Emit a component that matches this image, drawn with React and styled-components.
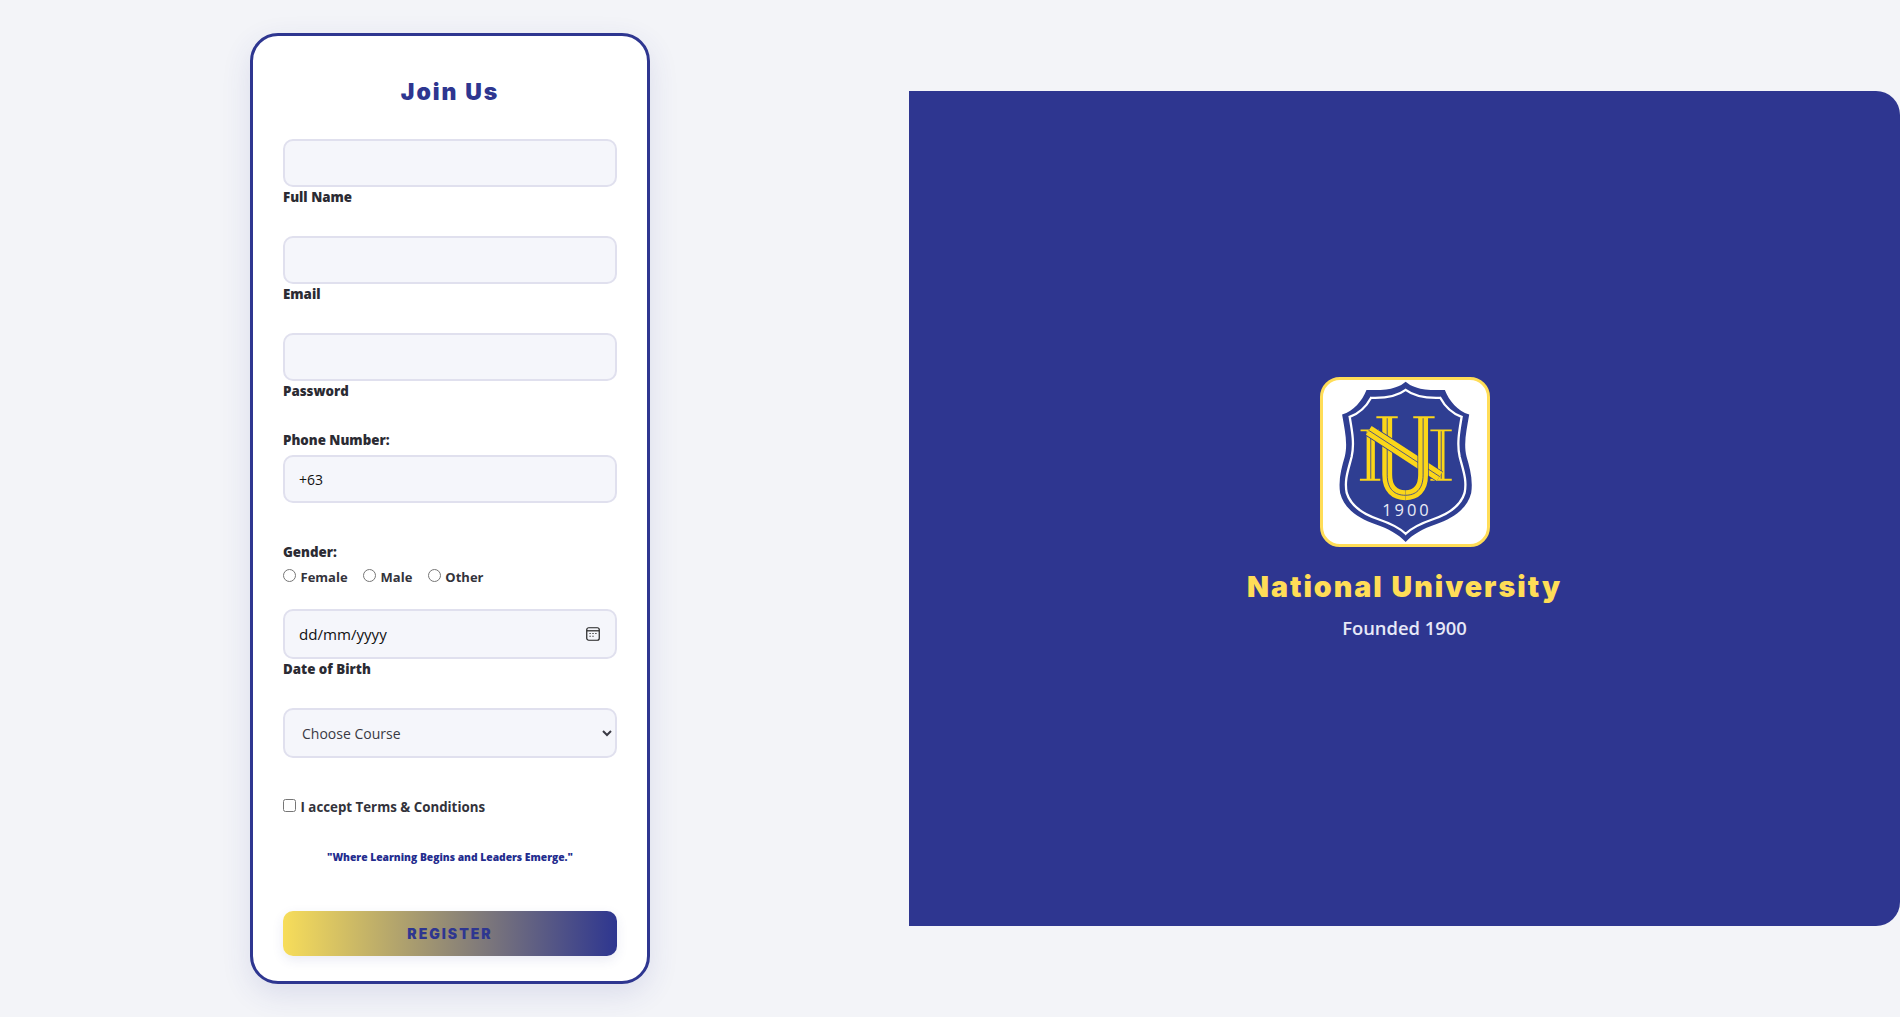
import React from "react";
import styled, { createGlobalStyle } from "styled-components";

const Global = createGlobalStyle`
  html, body { margin: 0; padding: 0; background: #f3f4f8; }
  body { font-family: "Open Sans", "Noto Sans", sans-serif; overflow: hidden; }
`;

const Page = styled.main`
  display: grid;
  grid-template-columns: 900px 1fr;
  column-gap: 9px;
  align-items: center;
  height: 1017px;
`;

const FormColumn = styled.div`
  display: flex;
  justify-content: center;
`;

const Card = styled.form`
  box-sizing: border-box;
  width: 400px;
  height: 951px;
  padding: 40px 30px 24px;
  display: flex;
  flex-direction: column;
  background: #fff;
  border: 3px solid #2e3690;
  border-radius: 28px;
  box-shadow: 0 10px 30px rgba(46, 54, 144, 0.12);
`;

const Title = styled.h2`
  margin: 0 0 30px;
  height: 33px;
  line-height: 33px;
  text-align: center;
  font-family: "Inter", sans-serif;
  font-size: 23px;
  font-weight: 900;
  letter-spacing: 2px;
  color: #2e3690;
`;

const Label = styled.label`
  display: block;
  height: 18px;
  line-height: 18px;
  margin-top: ${(p) => p.$top ?? 1}px;
  margin-bottom: ${(p) => p.$bottom ?? 30}px;
  font-family: "Open Sans", sans-serif;
  font-size: 13.3px;
  font-weight: 800;
  color: #2b2b33;
`;

const Input = styled.input`
  box-sizing: border-box;
  display: block;
  width: 100%;
  height: ${(p) => p.$h ?? 48}px;
  margin-bottom: ${(p) => p.$bottom ?? 0}px;
  padding: 0 14px;
  background: #f5f6fb;
  border: 2px solid #e0e0ee;
  border-radius: 10px;
  font-family: "Open Sans", sans-serif;
  font-size: ${(p) => p.$size ?? 14}px;
  color: #111;
  outline: none;
  &::placeholder { color: #111; opacity: 1; }
`;

const DateBox = styled.div`
  position: relative;
`;

const CalendarIcon = styled.svg`
  position: absolute;
  top: 18px;
  right: 17px;
  width: 14px;
  height: 14px;
`;

const Select = styled.select`
  box-sizing: border-box;
  display: block;
  width: 100%;
  height: 50px;
  margin-bottom: 40px;
  padding: 0 13px;
  background: #f5f6fb;
  border: 2px solid #e0e0ee;
  border-radius: 10px;
  font-family: "Open Sans", sans-serif;
  font-size: 14px;
  color: #3a3a44;
`;

const ChoiceRow = styled.div`
  display: flex;
  align-items: center;
  gap: 15.5px;
  height: 18px;
  margin-bottom: ${(p) => p.$bottom}px;
`;

const Choice = styled.label`
  display: flex;
  align-items: center;
  gap: 4.5px;
  font-family: "Open Sans", sans-serif;
  font-size: ${(p) => p.$size ?? 13}px;
  font-weight: 700;
  color: #33333b;
  input { margin: 0 0 3px; width: 13px; height: 13px; }
`;

const Quote = styled.p`
  margin: 0 0 45px;
  height: 18px;
  line-height: 18px;
  text-align: center;
  font-family: "Open Sans", sans-serif;
  font-size: 10.3px;
  font-weight: 800;
  color: #232c8e;
`;

const Submit = styled.button`
  height: 45px;
  border: 0;
  border-radius: 10px;
  background: linear-gradient(90deg, #f7dd5a, #2e3690);
  box-shadow: 0 4px 12px rgba(46, 54, 144, 0.1);
  font-family: "Inter", sans-serif;
  font-size: 14px;
  font-weight: 900;
  letter-spacing: 2px;
  color: #2e3690;
`;

const Panel = styled.aside`
  height: 835px;
  display: flex;
  flex-direction: column;
  align-items: center;
  justify-content: center;
  background: #2e3690;
  border-radius: 0 24px 24px 0;
`;

const LogoBox = styled.div`
  box-sizing: border-box;
  width: 170px;
  height: 170px;
  margin-bottom: 20px;
  background: #fff;
  border: 3px solid #ffdd57;
  border-radius: 20px;
  overflow: hidden;
  svg { display: block; }
`;

const School = styled.h1`
  margin: 0 0 9px;
  line-height: 40px;
  font-family: "Inter", sans-serif;
  font-size: 28.6px;
  font-weight: 900;
  letter-spacing: 2px;
  color: #ffdd57;
`;

const Founded = styled.p`
  margin: 0;
  line-height: 24px;
  font-family: "Open Sans", sans-serif;
  font-size: 18.4px;
  font-weight: 600;
  color: #e6e8f7;
`;

const navy = "#2f3e92";
const gold = "#fbd619";

function Stroke({ d, w = 30 }) {
  return (
    <>
      <path d={d} fill="none" stroke={navy} strokeWidth={w + 4} />
      <path d={d} fill="none" stroke={gold} strokeWidth={w} />
      <path d={d} fill="none" stroke={navy} strokeWidth="2.5" />
    </>
  );
}

function Logo() {
  const uLeft = "M261 155V330C261 375 285 392 316 392";
  const uRight = "M316 392C347 392 370 375 370 330V155";
  const diagonal = "M205 195 L420 335";
  return (
    <svg width="164" height="164" viewBox="66 42 498 498" aria-label="NU seal">
      <path
        d="M317 47C300 62 270 76 198 72C185 105 160 135 124 147C132 195 142 235 132 275C122 310 112 345 118 385C131 435 175 462 225 480C265 494 295 510 317 534C339 510 369 494 409 480C459 462 503 435 516 385C522 345 512 310 502 275C492 235 502 195 510 147C474 135 449 105 436 72C364 76 334 62 317 47Z"
        fill={navy}
      />
      <path
        d="M317 72C300 85 265 98 212 96C198 122 178 143 147 154C154 195 162 235 153 275C143 315 130 345 138 385C150 425 185 448 232 464C270 477 298 490 317 509C336 490 364 477 402 464C449 448 484 425 496 385C504 345 491 315 481 275C472 235 480 195 487 154C456 143 436 122 422 96C369 98 334 85 317 72Z"
        fill="none"
        stroke="#fff"
        strokeWidth="7"
      />
      <Stroke d="M211 195V345" w={25} />
      <Stroke d="M425 195V345" w={20} />
      <path d="M178 345H240M180 195H236M392 345H457M392 195H457" stroke={gold} strokeWidth="6" />
      <Stroke d={uLeft} />
      <path d={diagonal} fill="none" stroke={navy} strokeWidth="37" />
      <path d={diagonal} fill="none" stroke={gold} strokeWidth="32" />
      <path d={diagonal} fill="none" stroke={navy} strokeWidth="2.5" />
      <Stroke d={uRight} />
      <path d="M228 155H293M340 155H405" stroke={gold} strokeWidth="6" />
      <text
        x="321"
        y="456"
        textAnchor="middle"
        fontFamily="'Open Sans', sans-serif"
        fontSize="50"
        fontWeight="500"
        letterSpacing="9"
        fill="#e9ebf6"
      >
        1900
      </text>
    </svg>
  );
}

export default function App() {
  return (
    <>
      <Global />
      <Page>
        <FormColumn>
          <Card onSubmit={(e) => e.preventDefault()}>
            <Title>Join Us</Title>
            <Input id="name" />
            <Label htmlFor="name">Full Name</Label>
            <Input id="email" type="email" />
            <Label htmlFor="email">Email</Label>
            <Input id="password" type="password" />
            <Label htmlFor="password" $bottom={31}>Password</Label>
            <Label htmlFor="phone" $top={0} $bottom={6}>Phone Number:</Label>
            <Input id="phone" defaultValue="+63" $bottom={40} />
            <Label as="div" $top={0} $bottom={7}>Gender:</Label>
            <ChoiceRow $bottom={23}>
              <Choice><input type="radio" name="gender" />Female</Choice>
              <Choice><input type="radio" name="gender" />Male</Choice>
              <Choice><input type="radio" name="gender" />Other</Choice>
            </ChoiceRow>
            <DateBox>
              <Input id="dob" placeholder="dd/mm/yyyy" $h={50} $size={15.1} />
              <CalendarIcon viewBox="0 0 14 14" fill="none" stroke="#222" aria-hidden="true">
                <rect x="0.75" y="0.75" width="12.5" height="12.5" rx="2" strokeWidth="1.2" />
                <path d="M1 3.8H13" strokeWidth="1.2" />
                <path d="M3.5 6.5h1.2M6.4 6.5h1.2M9.3 6.5h1.2M3.5 9.2h1.2M6.4 9.2h1.2" strokeWidth="1.1" />
              </CalendarIcon>
            </DateBox>
            <Label htmlFor="dob">Date of Birth</Label>
            <Select defaultValue=""><option value="">Choose Course</option></Select>
            <ChoiceRow $bottom={32}>
              <Choice $size={13.3}><input type="checkbox" />I accept Terms &amp; Conditions</Choice>
            </ChoiceRow>
            <Quote>"Where Learning Begins and Leaders Emerge."</Quote>
            <Submit type="submit">REGISTER</Submit>
          </Card>
        </FormColumn>
        <Panel>
          <LogoBox><Logo /></LogoBox>
          <School>National University</School>
          <Founded>Founded 1900</Founded>
        </Panel>
      </Page>
    </>
  );
}
